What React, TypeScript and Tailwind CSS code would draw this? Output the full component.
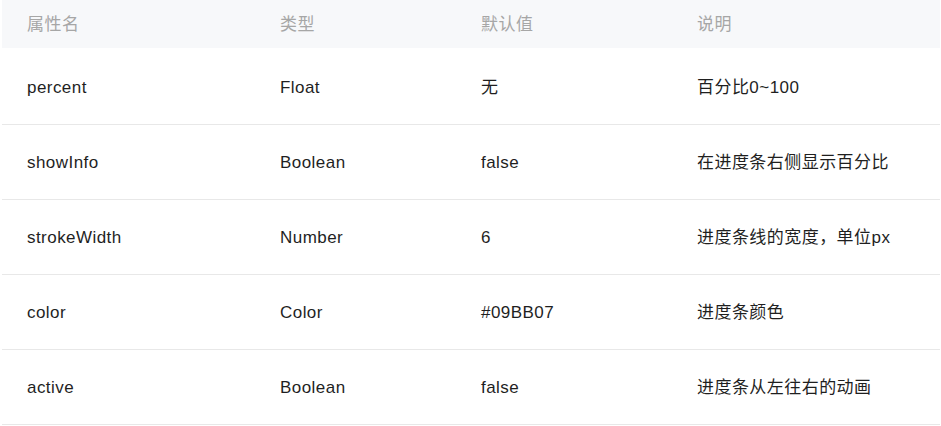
const COLS = ['属性名', '类型', '默认值', '说明']

const ROWS = [
  ['percent', 'Float', '无', '百分比0~100'],
  ['showInfo', 'Boolean', 'false', '在进度条右侧显示百分比'],
  ['strokeWidth', 'Number', '6', '进度条线的宽度，单位px'],
  ['color', 'Color', '#09BB07', '进度条颜色'],
  ['active', 'Boolean', 'false', '进度条从左往右的动画'],
]

const grid = 'grid grid-cols-[253px_201px_216px_1fr]'

export default function App() {
  return (
    <div className="w-[941px] h-[426px] bg-white pl-[2px] pr-px font-['Liberation_Sans','Noto_Sans_CJK_SC',sans-serif] text-[17px] tracking-[0.45px]">
      <div className={`${grid} h-12 items-center pt-[2px] bg-[#f7f8fa] text-[#a6a6a6]`}>
        {COLS.map((c) => (
          <div key={c} className="pl-[25px]">
            {c}
          </div>
        ))}
      </div>
      <div className="pt-[2px]">
        {ROWS.map((row) => (
          <div
            key={row[0]}
            className={`${grid} h-[75px] items-center pt-[2px] border-b border-[#e8e8e8] text-[#1f1f1f]`}
          >
            {row.map((cell, i) => (
              <div key={i} className="pl-[25px]">
                {cell}
              </div>
            ))}
          </div>
        ))}
      </div>
    </div>
  )
}
